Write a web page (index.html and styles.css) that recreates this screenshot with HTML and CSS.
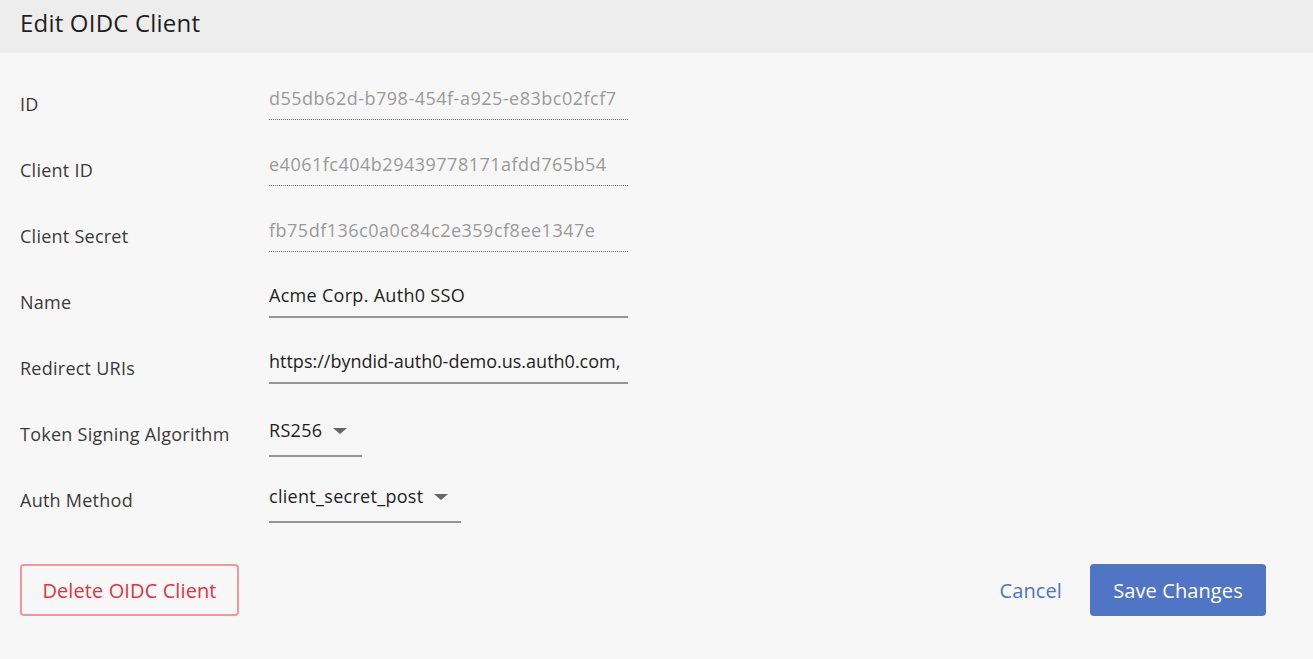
FILE: index.html
```html
<!DOCTYPE html>
<html>
<head>
<meta charset="utf-8">
<link rel="stylesheet" href="styles.css">
</head>
<body>
<div class="page">
  <header class="header">Edit OIDC Client</header>
  <main class="body">
    <div class="form">
      <div class="row">
        <div class="label">ID</div>
        <div class="field readonly">d55db62d-b798-454f-a925-e83bc02fcf7</div>
      </div>
      <div class="row">
        <div class="label">Client ID</div>
        <div class="field readonly">e4061fc404b29439778171afdd765b54</div>
      </div>
      <div class="row">
        <div class="label">Client Secret</div>
        <div class="field readonly">fb75df136c0a0c84c2e359cf8ee1347e</div>
      </div>
      <div class="row">
        <div class="label">Name</div>
        <div class="field editable">Acme Corp. Auth0 SSO</div>
      </div>
      <div class="row">
        <div class="label">Redirect URIs</div>
        <div class="field editable url">https://byndid-auth0-demo.us.auth0.com,</div>
      </div>
      <div class="row">
        <div class="label">Token Signing Algorithm</div>
        <div class="select select-rs"><span class="select-text">RS256</span><span class="caret"></span></div>
      </div>
      <div class="row">
        <div class="label">Auth Method</div>
        <div class="select select-auth"><span class="select-text">client_secret_post</span><span class="caret"></span></div>
      </div>
    </div>
    <div class="actions">
      <button class="btn btn-danger">Delete OIDC Client</button>
      <div class="actions-right">
        <button class="btn btn-link">Cancel</button>
        <button class="btn btn-primary">Save Changes</button>
      </div>
    </div>
  </main>
</div>
</body>
</html>
```

FILE: styles.css
```css
* { box-sizing: border-box; }
html, body {
  margin: 0;
  padding: 0;
  background: #f7f7f7;
  font-family: "Open Sans", "Liberation Sans", sans-serif;
  color: #222;
}
.page {
  width: 1313px;
  height: 659px;
  background: #f7f7f7;
}
.header {
  height: 53px;
  background: #ededed;
  padding: 7px 20px 0;
  font-size: 24px;
  line-height: 32px;
  font-weight: 500;
  letter-spacing: 0.2px;
  color: #1f1f1f;
}
.body {
  padding: 18px 47px 0 20px;
}
.form {
  display: flex;
  flex-direction: column;
}
.row {
  height: 66px;
  display: flex;
  align-items: center;
}
.label {
  width: 249px;
  font-size: 18px;
  line-height: 22px;
  letter-spacing: 0.25px;
  color: #3a3a3a;
}
.field {
  width: 359px;
  font-size: 18px;
  line-height: 22px;
  letter-spacing: 0.3px;
  padding: 3px 0 10px;
  margin-bottom: 5px;
  white-space: nowrap;
  overflow: hidden;
}
.readonly {
  color: #9a9a9a;
  letter-spacing: 0.5px;
  border-bottom: 1px dotted #6f6f6f;
  height: 36px;
}
.editable {
  color: #1e1e1e;
  border-bottom: 2px solid #959595;
  height: 37px;
}
.url {
  letter-spacing: 0;
}
.select {
  display: flex;
  align-items: center;
  gap: 11px;
  font-size: 18px;
  line-height: 22px;
  letter-spacing: 0.3px;
  padding: 4px 10px 14px 0;
  margin-top: 4px;
  border-bottom: 2px solid #959595;
  color: #1e1e1e;
  white-space: nowrap;
}
.select-rs { width: 93px; }
.select-auth { width: 192px; }
.caret {
  flex: none;
  width: 0;
  height: 0;
  border-left: 7px solid transparent;
  border-right: 7px solid transparent;
  border-top: 6px solid #666;
  margin-top: 2px;
}
.actions {
  margin-top: 31px;
  display: flex;
  justify-content: space-between;
  align-items: center;
}
.actions-right {
  display: flex;
  align-items: center;
  gap: 8px;
}
.btn {
  font-family: "Open Sans", "Liberation Sans", sans-serif;
  font-size: 20px;
  letter-spacing: 0.1px;
  height: 52px;
  border-radius: 4px;
  padding: 0 24px;
  background: transparent;
  border: none;
  cursor: pointer;
  white-space: nowrap;
}
.btn-danger {
  border: 2px solid #f0979c;
  color: #dc3545;
  width: 219px;
  padding: 0;
}
.btn-link {
  color: #5075c4;
  padding: 0 20px;
}
.btn-primary {
  background: #5075c4;
  color: #fff;
  width: 176px;
  padding: 0;
}
```
